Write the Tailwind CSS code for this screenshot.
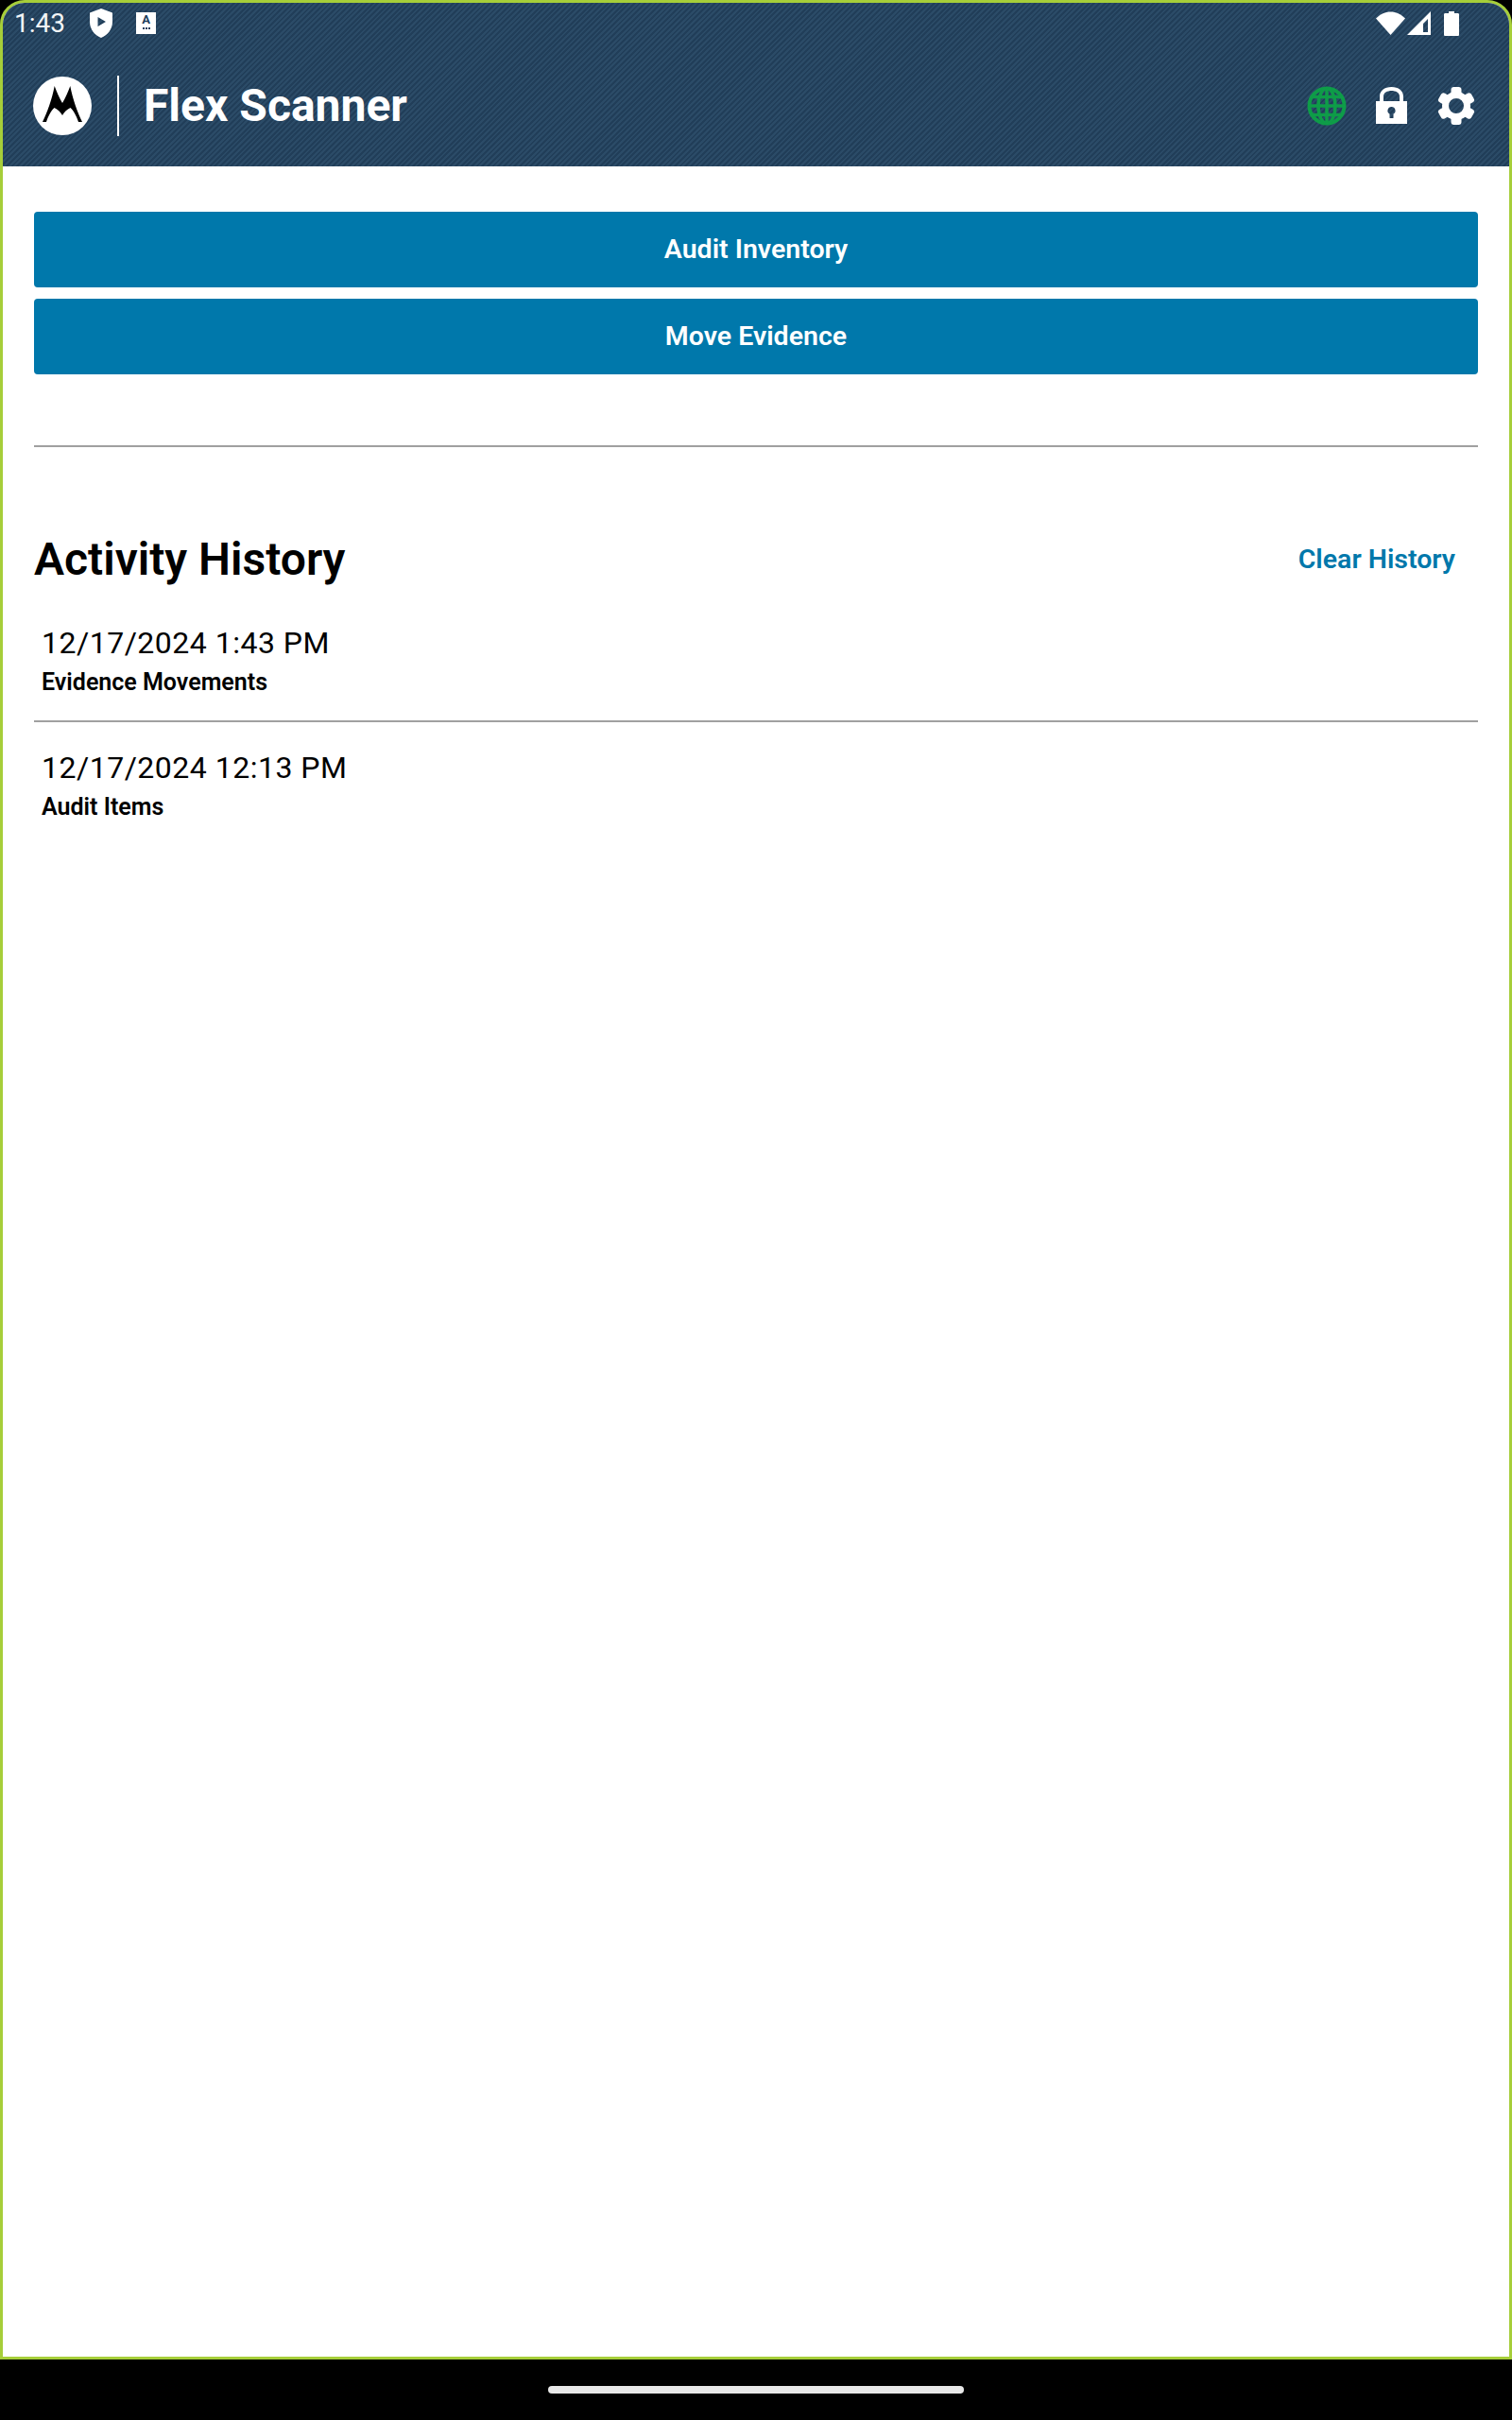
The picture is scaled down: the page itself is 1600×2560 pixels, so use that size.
<!DOCTYPE html>
<html lang="en">
<head>
    <meta charset="UTF-8">
    <meta name="viewport" content="width=device-width, initial-scale=1.0">
    <title>Flex Scanner</title>
    <script src="https://cdn.jsdelivr.net/npm/@tailwindcss/browser@4"></script>
</head>
<body class="bg-black font-[Roboto,sans-serif] text-black">
    <div class="w-[1600px] h-[2560px] flex flex-col bg-black">
        <!-- App frame -->
        <div class="h-[2496px] flex flex-col bg-white border-[3px] border-[#a6ce39] rounded-t-[26px] overflow-hidden">
            <!-- Header -->
            <header class="h-[173px] shrink-0 flex flex-col text-white bg-[repeating-linear-gradient(135deg,#213e59_0px,#213e59_2px,#2b4b67_2px,#2b4b67_4px)]">
                <!-- Status bar -->
                <div class="h-[43px] flex items-center pl-[12px] pr-[53px]">
                    <span class="text-[28px] leading-none font-normal w-[79px] text-[#f2f4f6]">1:43</span>
                    <svg class="w-[26px] h-[31px]" viewBox="0 0 26 31">
                        <path fill="#fff" fill-rule="evenodd" d="M13 0 L25 4.5 V14 C25 22 20 28 13 31 C6 28 1 22 1 14 V4.5 Z M9.5 9 V19 L18 14 Z"/>
                    </svg>
                    <div class="ml-[24px] w-[21px] h-[23px] bg-white flex flex-col items-center text-[#203c5b]">
                        <span class="text-[13px] leading-[15px] font-bold">A</span>
                        <span class="flex gap-px mt-px">
                            <span class="w-[2px] h-[2px] bg-[#203c5b]"></span>
                            <span class="w-[2px] h-[2px] bg-[#203c5b]"></span>
                            <span class="w-[2px] h-[2px] bg-[#203c5b]"></span>
                        </span>
                    </div>
                    <div class="ml-auto flex items-center">
                        <svg class="w-[31px] h-[25px]" viewBox="0 0 31 25">
                            <path fill="#fff" d="M0 7.5 C9 -2 22 -2 31 7.5 L15.5 25 Z"/>
                        </svg>
                        <svg class="ml-[2px] w-[25px] h-[25px]" viewBox="0 0 25 25">
                            <path fill="#fff" fill-rule="evenodd" d="M25 0 V25 H0 Z M22 8 L17 13 V22 H22 Z"/>
                        </svg>
                        <svg class="ml-[14px] w-[16px] h-[26px]" viewBox="0 0 16 26">
                            <path fill="#fff" d="M5 0 H11 V2 H14.5 C15.5 2 16 2.5 16 3.5 V24.5 C16 25.5 15.5 26 14.5 26 H1.5 C0.5 26 0 25.5 0 24.5 V3.5 C0 2.5 0.5 2 1.5 2 H5 Z"/>
                        </svg>
                    </div>
                </div>
                <!-- Toolbar -->
                <div class="flex-1 flex items-center pl-[32px] pr-[36px] pt-[2px]">
                    <svg class="w-[62px] h-[62px]" viewBox="0 0 62 62">
                        <circle cx="31" cy="31" r="31" fill="#fff"/>
                        <path fill="#000" d="M22.7 10 C25 16 28 23 31 28 C34 23 37 16 39.3 10 C42 24 47 38 52 48 L48 48 C46 42 43 36 39.5 33 C36 34.5 33 37.5 31 41 C29 37.5 26 34.5 22.5 33 C19 36 16 42 14 48 L10 48 C15 38 20 24 22.7 10 Z"/>
                    </svg>
                    <div class="ml-[27px] w-[2px] h-[64px] bg-white"></div>
                    <h1 class="ml-[26px] text-[48px] leading-none font-bold">Flex Scanner</h1>
                    <div class="ml-auto flex items-center">
                        <svg class="w-[42px] h-[42px]" viewBox="0 0 42 42" fill="none" stroke="#0e9c48" stroke-width="3.5">
                            <circle cx="21" cy="21" r="18.5" stroke-width="4"/>
                            <ellipse cx="21" cy="21" rx="9" ry="18.5"/>
                            <path d="M21 2 V40 M2.5 21 H39.5 M5 11.5 H37 M5 30.5 H37"/>
                        </svg>
                        <svg class="ml-[31px] w-[33px] h-[40px]" viewBox="0 0 33 40">
                            <path fill="#fff" fill-rule="evenodd" d="M0 15 H4 V10 C4 4 9 0 16.5 0 C24 0 29 4 29 10 V15 H33 V39 H0 Z M8 15 H25 V10 C25 6 21 4 16.5 4 C12 4 8 6 8 10 Z M16.5 21 A4 4 0 0 0 14.5 28.5 V33 H18.5 V28.5 A4 4 0 0 0 16.5 21 Z"/>
                        </svg>
                        <svg class="ml-[32px] w-[40px] h-[40px]" viewBox="0 0 40 40">
                            <circle cx="20" cy="20" r="11.5" fill="none" stroke="#fff" stroke-width="7"/>
                            <g fill="#fff">
                                <rect x="14.5" y="0" width="11" height="10" rx="3"/>
                                <rect x="14.5" y="0" width="11" height="10" rx="3" transform="rotate(60 20 20)"/>
                                <rect x="14.5" y="0" width="11" height="10" rx="3" transform="rotate(120 20 20)"/>
                                <rect x="14.5" y="0" width="11" height="10" rx="3" transform="rotate(180 20 20)"/>
                                <rect x="14.5" y="0" width="11" height="10" rx="3" transform="rotate(240 20 20)"/>
                                <rect x="14.5" y="0" width="11" height="10" rx="3" transform="rotate(300 20 20)"/>
                            </g>
                        </svg>
                    </div>
                </div>
            </header>

            <!-- Content -->
            <main class="flex-1 px-[33px] pt-[48px]">
                <div class="flex flex-col gap-[12px]">
                    <button class="h-[80px] w-full bg-[#0078ab] text-white text-[28.5px] font-semibold rounded-[4px]">Audit Inventory</button>
                    <button class="h-[80px] w-full bg-[#0078ab] text-white text-[28.5px] font-semibold rounded-[4px]">Move Evidence</button>
                </div>

                <div class="mt-[75px] h-[2px] bg-[#a0a0a0]"></div>

                <div class="mt-[89px] flex items-center justify-between h-[60px]">
                    <h2 class="text-[48px] leading-none font-semibold">Activity History</h2>
                    <button class="mr-[24px] text-[28.5px] font-semibold text-[#0078ab]">Clear History</button>
                </div>

                <ul class="mt-[38px]">
                    <li class="h-[104px] pl-[8px] border-b-2 border-[#a0a0a0] flex flex-col">
                        <span class="text-[32px] leading-[40px] tracking-[0.5px]">12/17/2024 1:43 PM</span>
                        <span class="mt-[2px] text-[25px] leading-[40px] font-semibold">Evidence Movements</span>
                    </li>
                    <li class="h-[110px] pt-[28px] pl-[8px] flex flex-col">
                        <span class="text-[32px] leading-[40px] tracking-[0.5px]">12/17/2024 12:13 PM</span>
                        <span class="mt-[2px] text-[25px] leading-[40px] font-semibold">Audit Items</span>
                    </li>
                </ul>
            </main>
        </div>

        <!-- Navigation bar -->
        <div class="flex-1 flex items-center justify-center">
            <div class="w-[440px] h-[8px] rounded-full bg-[#e8e8e8]"></div>
        </div>
    </div>
</body>
</html>
